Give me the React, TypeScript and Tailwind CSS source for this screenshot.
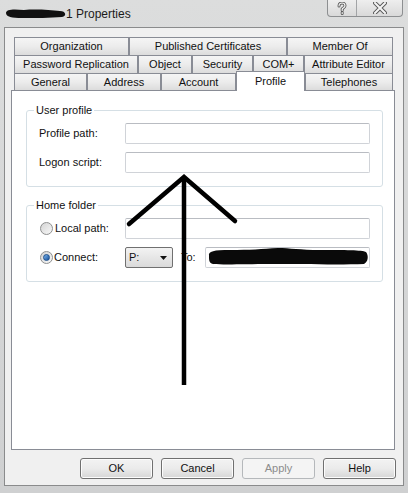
import React from "react";

type TabDef = { label: string; cls: string };

const row1: TabDef[] = [
  { label: "Organization", cls: "w-[115px]" },
  { label: "Published Certificates", cls: "w-[158px]" },
  { label: "Member Of", cls: "w-[106px]" },
];
const row2: TabDef[] = [
  { label: "Password Replication", cls: "w-[124px]" },
  { label: "Object", cls: "w-[54px]" },
  { label: "Security", cls: "w-[61px]" },
  { label: "COM+", cls: "w-[51px]" },
  { label: "Attribute Editor", cls: "w-[89px]" },
];

function Tab({ t }: { t: TabDef }) {
  return (
    <div
      className={`${t.cls} h-full shrink-0 flex items-center justify-center border-t border-l border-r border-[#898c95] bg-gradient-to-b from-[#f5f5f5] via-[#ececec] to-[#dcdcdc] text-[11px] leading-none text-[#111] whitespace-nowrap`}
    >
      {t.label}
    </div>
  );
}

function Input({ cls }: { cls: string }) {
  return (
    <div
      className={`${cls} h-[21px] shrink-0 rounded-[2px] border border-[#d0d3d8] border-t-[#b9bcc2] bg-white`}
    />
  );
}

function Button({ label, disabled }: { label: string; disabled?: boolean }) {
  return (
    <div
      className={
        disabled
          ? "w-[73px] h-[21px] rounded-[3px] border border-[#b5b8bb] bg-[#f4f4f4] flex items-center justify-center text-[11px] text-[#8c8c8c]"
          : "w-[73px] h-[21px] rounded-[3px] border border-[#707070] bg-gradient-to-b from-[#f3f3f3] via-[#ebebeb] to-[#d6d6d6] flex items-center justify-center text-[11px] text-[#111] shadow-[inset_0_0_0_1px_#fcfcfc]"
      }
    >
      {label}
    </div>
  );
}

function Radio({ checked }: { checked?: boolean }) {
  return (
    <div className="w-[13px] h-[13px] shrink-0 rounded-full border border-[#8e8f8f] bg-gradient-to-br from-[#d4d4d4] to-[#f8f8f8] flex items-center justify-center">
      {checked && (
        <div className="w-[7px] h-[7px] rounded-full bg-gradient-to-br from-[#7ab4ec] to-[#14509a] border border-[#1d4f8c]" />
      )}
    </div>
  );
}

export default function App() {
  return (
    <div
      className="relative w-[408px] h-[493px] overflow-hidden bg-gradient-to-b from-[#dcdddd] to-[#cfd0d1]"
      style={{ fontFamily: '"Liberation Sans", Arial, sans-serif' }}
    >
      {/* title bar */}
      <div className="h-[27px] flex justify-between">
        <div className="flex items-center pl-[66px] text-[12px] text-[#1b1b1b] leading-none">
          <span>1 Properties</span>
        </div>
        <div className="flex h-[17px] mr-[5px] rounded-b-[4px] border border-t-0 border-[#8d8f91] bg-gradient-to-b from-[#eeeeee] to-[#d9d9d9] overflow-hidden">
          <div className="w-[29px] h-full flex items-center justify-center border-r border-[#a2a4a6]">
            <svg width="10" height="13" viewBox="0 0 10 13">
              <path
                d="M2 4 C2 1.5 4 1 5 1 C6.5 1 8 2 8 3.8 C8 5.5 6 6 5.2 7 L5.2 8.5 M5.2 10.5 L5.2 11.5"
                fill="none"
                stroke="#5e5e5e"
                strokeWidth="3"
                strokeLinecap="round"
              />
              <path
                d="M2 4 C2 1.5 4 1 5 1 C6.5 1 8 2 8 3.8 C8 5.5 6 6 5.2 7 L5.2 8.5 M5.2 10.5 L5.2 11.5"
                fill="none"
                stroke="#f4f4f4"
                strokeWidth="1.2"
                strokeLinecap="round"
              />
            </svg>
          </div>
          <div className="w-[45px] h-full flex items-center justify-center">
            <svg width="14" height="12" viewBox="0 0 14 12">
              <path d="M2 1 L12 11 M12 1 L2 11" stroke="#5a5a5a" strokeWidth="4" strokeLinecap="square" />
              <path d="M2 1 L12 11 M12 1 L2 11" stroke="#f4f4f4" strokeWidth="2" strokeLinecap="square" />
            </svg>
          </div>
        </div>
      </div>

      {/* client area */}
      <div className="mx-[4px] h-[459px] border border-[#8a8b8c] bg-[#f0f0f0] pl-[6px] pt-[9px] pr-[7px] text-[#111]">
        {/* tabs */}
        <div className="ml-[3px] w-[379px]">
          <div className="flex h-[18px]">
            {row1.map((t) => (
              <Tab key={t.label} t={t} />
            ))}
          </div>
          <div className="flex h-[18px]">
            {row2.map((t) => (
              <Tab key={t.label} t={t} />
            ))}
          </div>
          <div className="flex h-[17px] items-end">
            <Tab t={{ label: "General", cls: "w-[73px]" }} />
            <Tab t={{ label: "Address", cls: "w-[74px]" }} />
            <Tab t={{ label: "Account", cls: "w-[75px]" }} />
            <div className="relative z-10 w-[69px] h-[20px] -mb-[1px] shrink-0 flex items-center justify-center pb-[1px] border-t border-l border-r border-[#898c95] bg-white text-[11px] leading-none">
              Profile
            </div>
            <Tab t={{ label: "Telephones", cls: "w-[88px]" }} />
          </div>
        </div>

        {/* panel */}
        <div className="w-[384px] h-[360px] border border-[#898c95] bg-white pt-[19px] pl-[14px]">
          {/* User profile */}
          <div className="relative w-[357px] h-[77px] rounded-[3px] border border-[#d5dfe5] pt-[12px] pl-[12px] flex flex-col gap-[8px]">
            <span className="absolute -top-[7px] left-[7px] bg-white px-[2px] text-[11px] leading-[13px]">
              User profile
            </span>
            <div className="flex items-center">
              <span className="w-[86px] text-[11px] leading-[13px]">Profile path:</span>
              <Input cls="w-[245px]" />
            </div>
            <div className="flex items-center">
              <span className="w-[86px] text-[11px] leading-[13px]">Logon script:</span>
              <Input cls="w-[245px]" />
            </div>
          </div>

          {/* Home folder */}
          <div className="relative mt-[18px] w-[357px] h-[77px] rounded-[3px] border border-[#d5dfe5] pt-[12px] pl-[13px] flex flex-col gap-[8px]">
            <span className="absolute -top-[7px] left-[7px] bg-white px-[2px] text-[11px] leading-[13px]">
              Home folder
            </span>
            <div className="flex items-center">
              <Radio />
              <span className="ml-[2px] w-[70px] text-[11px] leading-[13px]">Local path:</span>
              <Input cls="w-[245px]" />
            </div>
            <div className="flex items-center">
              <Radio checked />
              <span className="ml-[1px] w-[71px] text-[11px] leading-[13px]">Connect:</span>
              <div className="w-[48px] h-[21px] shrink-0 rounded-[2px] border border-[#707070] bg-gradient-to-b from-[#f3f3f3] to-[#dadada] flex items-center justify-between pl-[3px] pr-[5px] text-[11px]">
                <span>P:</span>
                <svg width="7" height="4" viewBox="0 0 7 4">
                  <path d="M0 0 H7 L3.5 4 Z" fill="#111" />
                </svg>
              </div>
              <span className="ml-[8px] w-[24px] text-[11px] leading-[13px]">To:</span>
              <Input cls="w-[165px]" />
            </div>
          </div>
        </div>

        {/* buttons */}
        <div className="mt-[8px] flex justify-end gap-[8px]">
          <Button label="OK" />
          <Button label="Cancel" />
          <Button label="Apply" disabled />
          <Button label="Help" />
        </div>
      </div>

      {/* overlay annotations: redactions and hand-drawn arrow */}
      <svg
        className="absolute inset-0 pointer-events-none"
        width="408"
        height="493"
        viewBox="0 0 408 493"
      >
        <path
          d="M6 13 C6 9 14 9 24 10 C36 9 50 10 60 11 C66 11 67 16 62 17 C50 18 36 18 22 18 C12 18 6 17 6 13 Z"
          fill="#111"
        />
        <path
          d="M209 256 C208 251 214 250 230 250 C250 250 262 249 278 248 C290 248 300 250 320 250 C345 250 362 250 366 252 C369 256 368 262 364 264 C340 265 300 264 270 264 C245 264 225 265 213 264 C209 263 209 260 209 256 Z"
          fill="#0a0a0a"
        />
        <polyline
          points="129,224 184,177 235,221"
          fill="none"
          stroke="#000"
          strokeWidth="4.5"
          strokeLinecap="round"
          strokeLinejoin="miter"
        />
        <line x1="184" y1="177" x2="184" y2="385" stroke="#000" strokeWidth="4.5" strokeLinecap="butt" />
      </svg>
    </div>
  );
}
